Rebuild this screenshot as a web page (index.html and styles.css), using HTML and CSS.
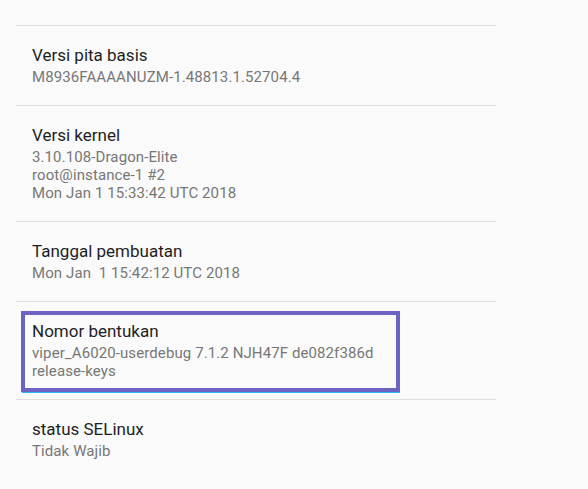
FILE: index.html
```html
<!DOCTYPE html>
<html>
<head>
<meta charset="utf-8">
<link rel="stylesheet" href="styles.css">
</head>
<body>
<div class="list">
  <div class="item">
    <div class="title">Versi pita basis</div>
    <div class="summary">M8936FAAAANUZM-1.48813.1.52704.4</div>
  </div>
  <div class="item">
    <div class="title">Versi kernel</div>
    <div class="summary">3.10.108-Dragon-Elite<br>root@instance-1 #2<br>Mon Jan 1 15:33:42 UTC 2018</div>
  </div>
  <div class="item">
    <div class="title">Tanggal pembuatan</div>
    <div class="summary">Mon Jan &nbsp;1 15:42:12 UTC 2018</div>
  </div>
  <div class="item">
    <div class="highlight"></div>
    <div class="title">Nomor bentukan</div>
    <div class="summary">viper_A6020-userdebug 7.1.2 NJH47F de082f386d<br>release-keys</div>
  </div>
  <div class="item">
    <div class="title">status SELinux</div>
    <div class="summary">Tidak Wajib</div>
  </div>
</div>
</body>
</html>
```

FILE: styles.css
```css
html, body {
  margin: 0;
  padding: 0;
  background: #fafafa;
  font-family: Roboto, "Noto Sans", sans-serif;
}

.list {
  margin-left: 16px;
  width: 480px;
  padding-top: 25px;
}

.item {
  position: relative;
  border-top: 1px solid #dedede;
  padding: 16px 16px 19px;
}

.title {
  font-size: 17px;
  line-height: 26px;
  color: #1f1f1f;
}

.summary {
  font-size: 15px;
  letter-spacing: 0.1px;
  line-height: 18px;
  color: #777777;
}

.highlight {
  position: absolute;
  left: 5px;
  top: 9px;
  width: 379px;
  height: 81px;
  box-sizing: border-box;
  border: 4px solid #6b64c3;
}

.highlight::after {
  content: "";
  position: absolute;
  left: -3px;
  right: -4px;
  bottom: -5px;
  height: 1px;
  background: #29b6f6;
}
```
